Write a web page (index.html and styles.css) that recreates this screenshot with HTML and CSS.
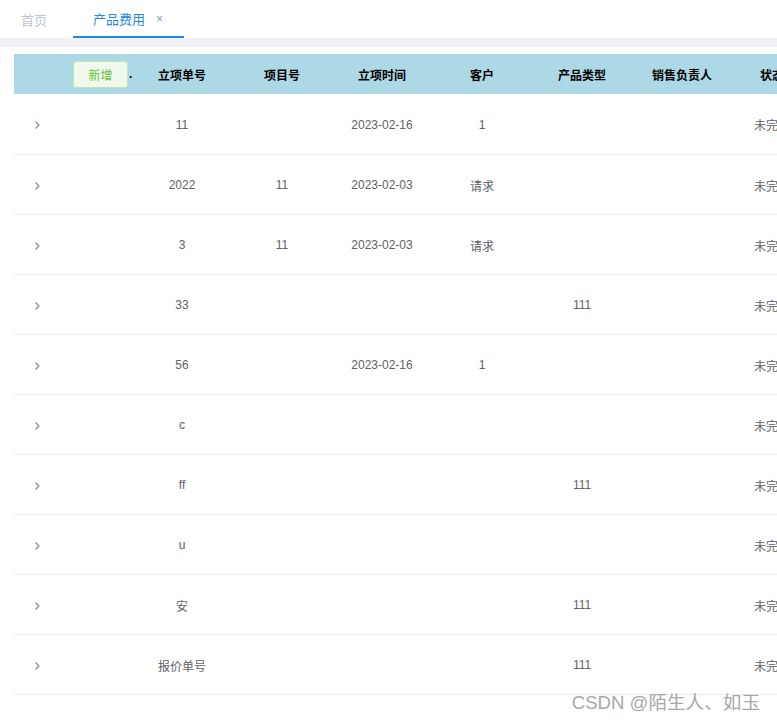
FILE: index.html
```html
<!DOCTYPE html>
<html>
<head>
<meta charset="utf-8">
<link rel="stylesheet" href="styles.css">
</head>
<body>
<div class="tabs">
  <div class="tab">首页</div>
  <div class="tab active">产品费用<span class="close">×</span></div>
</div>
<div class="strip"></div>
<div class="content">
  <table class="grid">
    <colgroup>
      <col class="c-exp"><col class="c-op"><col class="c-std"><col class="c-std"><col class="c-std"><col class="c-std"><col class="c-std"><col class="c-std"><col class="c-status">
    </colgroup>
    <thead>
      <tr>
        <th></th>
        <th class="op"><button class="add">新增</button><span class="dot">.</span></th>
        <th>立项单号</th><th>项目号</th><th>立项时间</th><th>客户</th><th>产品类型</th><th>销售负责人</th><th>状态</th>
      </tr>
    </thead>
    <tbody>
      <tr><td class="exp"><svg class="chev" width="7" height="10" viewBox="0 0 7 10"><path d="M1.5 1.5 L5 5 L1.5 8.5" fill="none" stroke="#7486a6" stroke-width="1.1"/></svg></td><td></td><td>11</td><td></td><td>2023-02-16</td><td>1</td><td></td><td></td><td>未完成</td></tr>
      <tr><td class="exp"><svg class="chev" width="7" height="10" viewBox="0 0 7 10"><path d="M1.5 1.5 L5 5 L1.5 8.5" fill="none" stroke="#7486a6" stroke-width="1.1"/></svg></td><td></td><td>2022</td><td>11</td><td>2023-02-03</td><td>请求</td><td></td><td></td><td>未完成</td></tr>
      <tr><td class="exp"><svg class="chev" width="7" height="10" viewBox="0 0 7 10"><path d="M1.5 1.5 L5 5 L1.5 8.5" fill="none" stroke="#7486a6" stroke-width="1.1"/></svg></td><td></td><td>3</td><td>11</td><td>2023-02-03</td><td>请求</td><td></td><td></td><td>未完成</td></tr>
      <tr><td class="exp"><svg class="chev" width="7" height="10" viewBox="0 0 7 10"><path d="M1.5 1.5 L5 5 L1.5 8.5" fill="none" stroke="#7486a6" stroke-width="1.1"/></svg></td><td></td><td>33</td><td></td><td></td><td></td><td>111</td><td></td><td>未完成</td></tr>
      <tr><td class="exp"><svg class="chev" width="7" height="10" viewBox="0 0 7 10"><path d="M1.5 1.5 L5 5 L1.5 8.5" fill="none" stroke="#7486a6" stroke-width="1.1"/></svg></td><td></td><td>56</td><td></td><td>2023-02-16</td><td>1</td><td></td><td></td><td>未完成</td></tr>
      <tr><td class="exp"><svg class="chev" width="7" height="10" viewBox="0 0 7 10"><path d="M1.5 1.5 L5 5 L1.5 8.5" fill="none" stroke="#7486a6" stroke-width="1.1"/></svg></td><td></td><td>c</td><td></td><td></td><td></td><td></td><td></td><td>未完成</td></tr>
      <tr><td class="exp"><svg class="chev" width="7" height="10" viewBox="0 0 7 10"><path d="M1.5 1.5 L5 5 L1.5 8.5" fill="none" stroke="#7486a6" stroke-width="1.1"/></svg></td><td></td><td>ff</td><td></td><td></td><td></td><td>111</td><td></td><td>未完成</td></tr>
      <tr><td class="exp"><svg class="chev" width="7" height="10" viewBox="0 0 7 10"><path d="M1.5 1.5 L5 5 L1.5 8.5" fill="none" stroke="#7486a6" stroke-width="1.1"/></svg></td><td></td><td>u</td><td></td><td></td><td></td><td></td><td></td><td>未完成</td></tr>
      <tr><td class="exp"><svg class="chev" width="7" height="10" viewBox="0 0 7 10"><path d="M1.5 1.5 L5 5 L1.5 8.5" fill="none" stroke="#7486a6" stroke-width="1.1"/></svg></td><td></td><td>安</td><td></td><td></td><td></td><td>111</td><td></td><td>未完成</td></tr>
      <tr><td class="exp"><svg class="chev" width="7" height="10" viewBox="0 0 7 10"><path d="M1.5 1.5 L5 5 L1.5 8.5" fill="none" stroke="#7486a6" stroke-width="1.1"/></svg></td><td></td><td>报价单号</td><td></td><td></td><td></td><td>111</td><td></td><td>未完成</td></tr>
    </tbody>
  </table>
</div>
<div class="watermark">CSDN @陌生人、如玉</div>
</body>
</html>
```
FILE: styles.css
```css
html, body {
  margin: 0;
  padding: 0;
  overflow: hidden;
  background: #fff;
  font-family: "Liberation Sans", "Noto Sans CJK SC", sans-serif;
  width: 777px;
  height: 723px;
  position: relative;
}
.tabs {
  display: flex;
  height: 38px;
  background: #fff;
}
.tab {
  display: flex;
  align-items: center;
  flex-shrink: 0;
  white-space: nowrap;
  font-size: 13px;
  color: #c0c4cc;
  padding: 0 26px 0 21px;
  box-sizing: border-box;
  height: 38px;
}
.tab.active {
  color: #1e8ae6;
  padding: 1px 0 0 20px;
  width: 111px;
  border-bottom: 2px solid #1e88e5;
}
.close {
  font-size: 12px;
  color: #8a93b8;
  margin-left: 11px;
}
.strip {
  height: 9px;
  background: #f0f1f5;
}
.content {
  padding: 7px 0 0 14px;
}
.grid {
  border-collapse: collapse;
  table-layout: fixed;
  width: 798px;
}
.c-exp { width: 49px; }
.c-op { width: 69px; }
.c-std { width: 100px; }
.c-status { width: 80px; }
thead tr {
  background: #add8e6;
  height: 40px;
}
th {
  font-size: 12px;
  font-weight: bold;
  color: #000;
  text-align: center;
  padding: 0;
  white-space: nowrap;
  overflow: hidden;
}
th.op {
  text-align: left;
  padding-left: 10px;
}
.add {
  width: 55px;
  height: 27px;
  background: #f0f9eb;
  border: 1px solid #c2e7b0;
  border-radius: 3px;
  color: #67c23a;
  font-size: 12px;
  font-family: inherit;
  padding: 0;
  vertical-align: middle;
}
.dot {
  font-weight: bold;
  vertical-align: middle;
  margin-left: 1px;
}
tbody tr {
  height: 60px;
}
td {
  font-size: 12px;
  color: #606266;
  text-align: center;
  border-bottom: 1px solid #ebeef5;
  padding: 2px 0 0 0;
  white-space: nowrap;
  overflow: hidden;
}
td.exp {
  text-align: left;
  padding-left: 20px;
  padding-top: 3px;
}
.chev {
  display: block;
}
.watermark {
  position: absolute;
  right: 17px;
  bottom: 9px;
  font-size: 18.6px;
  color: #a8a8a8;
}
```
